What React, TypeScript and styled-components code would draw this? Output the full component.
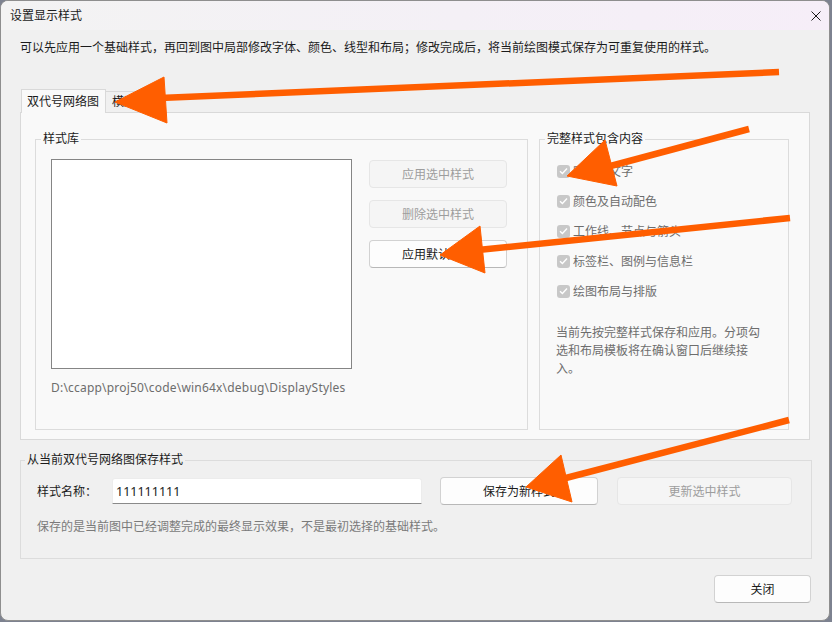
import React from "react";
import styled, { createGlobalStyle } from "styled-components";

const GlobalStyle = createGlobalStyle`
  html, body { margin: 0; padding: 0; }
  body {
    background: #7d8290;
    font-family: "Noto Sans", "Noto Sans CJK SC", sans-serif;
    font-size: 12px;
    color: #1b1b1b;
  }
  * { box-sizing: border-box; }
`;

const Window = styled.div`
  position: relative;
  width: 830px;
  height: 621px;
  border: 1px solid #8e8e8e;
  border-radius: 8px;
  overflow: hidden;
  background: #f0f0f0;
  display: flex;
  flex-direction: column;
`;

const TitleBar = styled.div`
  height: 29px;
  flex: none;
  display: flex;
  align-items: center;
  justify-content: space-between;
  padding: 0 8px 0 9px;
  background: linear-gradient(90deg, #f3f3f3 0%, #f4f0f6 55%, #f6eef8 100%);
`;

const Title = styled.span`
  font-size: 12px;
  line-height: 16px;
  color: #1b1b1b;
`;

const CloseGlyph = styled.svg`
  width: 10px;
  height: 10px;
  display: block;
`;

const Body = styled.div`
  flex: 1;
  display: flex;
  flex-direction: column;
  padding: 10px 19px 0 19px;
`;

const Description = styled.div`
  line-height: 16px;
  height: 16px;
  white-space: nowrap;
`;

const TabStrip = styled.div`
  margin-top: 34px;
  height: 22px;
  display: flex;
  align-items: flex-end;
  padding-left: 1px;
`;

const Tab = styled.div<{ $active?: boolean }>`
  position: relative;
  z-index: ${(p) => (p.$active ? 2 : 1)};
  height: ${(p) => (p.$active ? 24 : 21)}px;
  margin-bottom: ${(p) => (p.$active ? -1 : 0)}px;
  margin-left: ${(p) => (p.$active ? 0 : -1)}px;
  padding: ${(p) => (p.$active ? "2px 6px 0 5px" : "0 6px")};
  line-height: 20px;
  border: 1px solid #d9d9d9;
  border-bottom: none;
  background: ${(p) => (p.$active ? "#f9f9f9" : "#f0f0f0")};
  white-space: nowrap;
`;

const TabPanel = styled.div`
  position: relative;
  z-index: 1;
  border: 1px solid #d9d9d9;
  background: #f9f9f9;
  padding: 18px 20px 9px 14px;
  display: grid;
  grid-template-columns: 493px 250px;
  column-gap: 11px;
`;

const GroupBox = styled.fieldset<{ $height?: number }>`
  margin: 0;
  padding: 0;
  min-width: 0;
  border: 1px solid #dcdcdc;
  ${(p) => (p.$height ? `height: ${p.$height}px;` : "")}
`;

const Legend = styled.legend`
  margin-left: 5px;
  padding: 0 2px;
  line-height: 16px;
  font-size: 12px;
  color: #1b1b1b;
`;

const LibraryContent = styled.div`
  padding: 12px 0 0 15px;
`;

const LibraryRow = styled.div`
  display: flex;
  gap: 17px;
`;

const ListBox = styled.div`
  width: 301px;
  height: 210px;
  background: #ffffff;
  border: 1px solid #858585;
`;

const ButtonColumn = styled.div`
  margin-top: 1px;
  display: flex;
  flex-direction: column;
  gap: 12px;
`;

const Button = styled.div<{ $width: number; $disabled?: boolean }>`
  width: ${(p) => p.$width}px;
  height: 28px;
  display: flex;
  align-items: center;
  justify-content: center;
  border-radius: 4px;
  font-size: 12px;
  white-space: nowrap;
  background: ${(p) => (p.$disabled ? "#f5f5f5" : "#fdfdfd")};
  color: ${(p) => (p.$disabled ? "#9d9d9d" : "#1b1b1b")};
  border: 1px solid ${(p) => (p.$disabled ? "#e6e6e6" : "#d2d2d2")};
  border-bottom-color: ${(p) => (p.$disabled ? "#e6e6e6" : "#b8b8b8")};
`;

const PathText = styled.div`
  margin-top: 11px;
  line-height: 16px;
  color: #6d6d6d;
  letter-spacing: 0.2px;
  white-space: nowrap;
`;

const ContentsBody = styled.div`
  padding: 9px 0 0 17px;
`;

const CheckRow = styled.div`
  height: 30px;
  display: flex;
  align-items: center;
  gap: 3px;
  color: #6d6d6d;
  white-space: nowrap;
`;

const CheckBox = styled.span`
  width: 13px;
  height: 13px;
  border-radius: 3px;
  background: #c8c8c8;
  display: flex;
  align-items: center;
  justify-content: center;
`;

const Note = styled.div`
  margin-top: 18px;
  margin-left: -1px;
  width: 208px;
  line-height: 18px;
  color: #6d6d6d;
`;

const SaveGroup = styled(GroupBox)`
  margin-top: 12px;
  margin-right: -2px;
`;

const SaveLegend = styled(Legend)`
  margin-left: 4px;
`;

const SaveContent = styled.div`
  padding: 9px 0 23px 16px;
`;

const SaveRow = styled.div`
  display: flex;
  align-items: center;
  height: 28px;
`;

const FieldLabel = styled.span`
  width: 75px;
  flex: none;
`;

const TextInput = styled.div`
  width: 310px;
  height: 26px;
  margin-right: 18px;
  background: #ffffff;
  border: 1px solid #ececec;
  border-bottom: 1px solid #8a8a8a;
  border-radius: 3px 3px 0 0;
  padding: 0 0 0 3px;
  display: flex;
  align-items: center;
  font-size: 12.5px;
  color: #1b1b1b;
`;

const SideButtonGap = styled.div`
  width: 19px;
  flex: none;
`;

const SaveHint = styled.div`
  margin-top: 14px;
  line-height: 16px;
  color: #7a7a7a;
`;

const Footer = styled.div`
  margin-top: 16px;
  margin-right: -1px;
  display: flex;
  justify-content: flex-end;
`;

const Annotation = styled.svg`
  position: absolute;
  left: -1px;
  top: -1px;
  width: 830px;
  height: 621px;
  pointer-events: none;
  z-index: 10;
`;

const arrows = [
  { line: [779, 72, 160, 98], head: "115,102 164,77 167,123" },
  { line: [749, 129, 603, 168], head: "567,176 605,140 617,186" },
  { line: [790, 218, 478, 250], head: "440,255 480,226 485,273" },
  { line: [789, 420, 562, 479], head: "526,487 561,455 572,502" },
];

const checks = [
  "字体与文字",
  "颜色及自动配色",
  "工作线、节点与箭头",
  "标签栏、图例与信息栏",
  "绘图布局与排版",
];

const Check = () => (
  <svg width="9" height="8" viewBox="0 0 9 8">
    <path d="M1 4.2 L3.4 6.5 L8 1.5" fill="none" stroke="#ffffff" strokeWidth="1.4" />
  </svg>
);

export default function App() {
  return (
    <>
      <GlobalStyle />
      <Window>
        <TitleBar>
          <Title>设置显示样式</Title>
          <CloseGlyph viewBox="0 0 10 10">
            <path d="M0.5 0.5 L9.5 9.5 M9.5 0.5 L0.5 9.5" stroke="#1b1b1b" strokeWidth="1" />
          </CloseGlyph>
        </TitleBar>
        <Body>
          <Description>
            可以先应用一个基础样式，再回到图中局部修改字体、颜色、线型和布局；修改完成后，将当前绘图模式保存为可重复使用的样式。
          </Description>
          <TabStrip>
            <Tab $active>双代号网络图</Tab>
            <Tab>横道图</Tab>
          </TabStrip>
          <TabPanel>
            <GroupBox $height={299}>
              <Legend>样式库</Legend>
              <LibraryContent>
                <LibraryRow>
                  <ListBox />
                  <ButtonColumn>
                    <Button $width={138} $disabled>应用选中样式</Button>
                    <Button $width={138} $disabled>删除选中样式</Button>
                    <Button $width={138}>应用默认样式</Button>
                  </ButtonColumn>
                </LibraryRow>
                <PathText>D:\ccapp\proj50\code\win64x\debug\DisplayStyles</PathText>
              </LibraryContent>
            </GroupBox>
            <GroupBox $height={299}>
              <Legend>完整样式包含内容</Legend>
              <ContentsBody>
                {checks.map((c) => (
                  <CheckRow key={c}>
                    <CheckBox>
                      <Check />
                    </CheckBox>
                    {c}
                  </CheckRow>
                ))}
                <Note>当前先按完整样式保存和应用。分项勾选和布局模板将在确认窗口后继续接入。</Note>
              </ContentsBody>
            </GroupBox>
          </TabPanel>
          <SaveGroup>
            <SaveLegend>从当前双代号网络图保存样式</SaveLegend>
            <SaveContent>
              <SaveRow>
                <FieldLabel>样式名称：</FieldLabel>
                <TextInput>111111111</TextInput>
                <Button $width={158}>保存为新样式</Button>
                <SideButtonGap />
                <Button $width={175} $disabled>
                  更新选中样式
                </Button>
              </SaveRow>
              <SaveHint>保存的是当前图中已经调整完成的最终显示效果，不是最初选择的基础样式。</SaveHint>
            </SaveContent>
          </SaveGroup>
          <Footer>
            <Button $width={97}>关闭</Button>
          </Footer>
        </Body>
        <Annotation viewBox="0 0 830 621">
          {arrows.map((a, i) => (
            <g key={i} fill="#ff5e00" stroke="#ff5e00">
              <line
                x1={a.line[0]}
                y1={a.line[1]}
                x2={a.line[2]}
                y2={a.line[3]}
                strokeWidth="6.5"
                strokeLinecap="butt"
              />
              <polygon points={a.head} strokeWidth="1" strokeLinejoin="round" />
            </g>
          ))}
        </Annotation>
      </Window>
    </>
  );
}
